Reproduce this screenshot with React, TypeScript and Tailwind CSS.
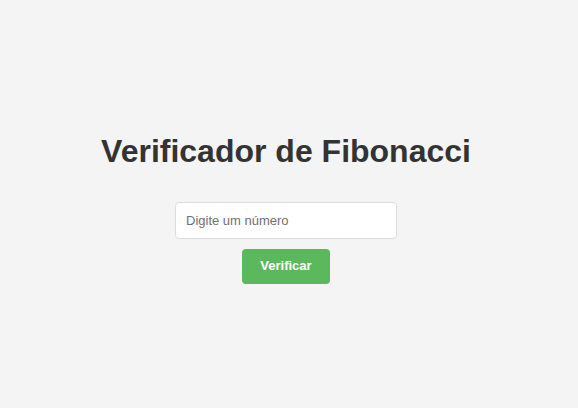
export default function App() {
  return (
    <div
      className="flex h-screen w-full flex-col items-center justify-center bg-[#f4f4f4] pr-[6px] pt-[8px] text-[#333]"
      style={{ fontFamily: '"Liberation Sans", Arial, sans-serif' }}
    >
      <h1 className="mb-[32px] text-[32px] font-bold leading-[37px]">Verificador de Fibonacci</h1>
      <input
        type="text"
        placeholder="Digite um número"
        className="h-[37px] w-[222px] rounded-[4px] border border-[#ddd] bg-white px-[10px] text-[13px] text-[#333] placeholder:text-[#6f6f6f] outline-none"
      />
      <button className="mt-[10px] h-[35px] w-[88px] rounded-[4px] bg-[#5cb85c] text-[13px] font-bold text-white">
        Verificar
      </button>
    </div>
  );
}
